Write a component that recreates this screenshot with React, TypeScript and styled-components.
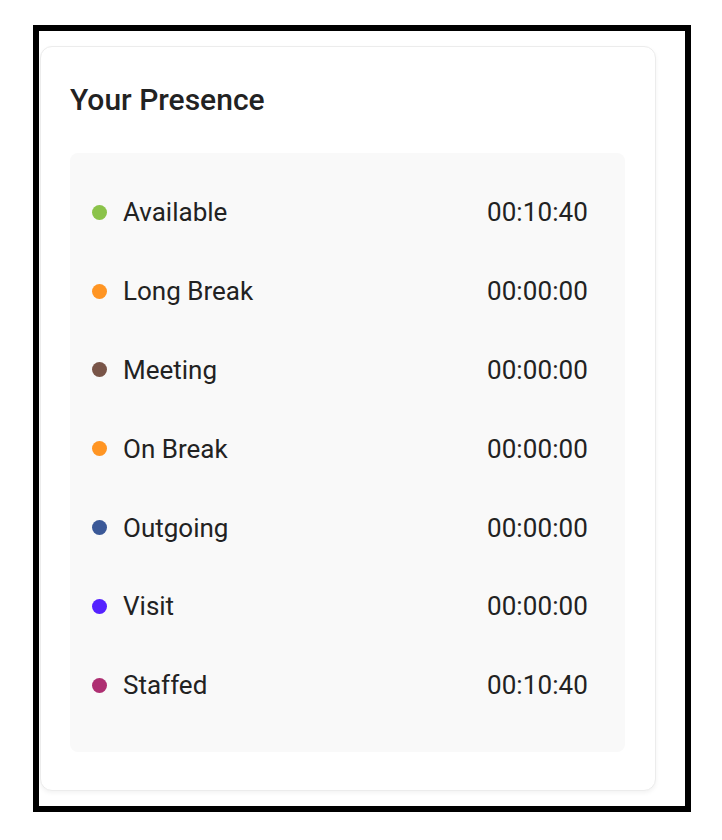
import React from "react";
import styled, { createGlobalStyle } from "styled-components";

const Global = createGlobalStyle`
  html, body { margin: 0; padding: 0; background: #ffffff; }
  body { font-family: Roboto, "Noto Sans", Arial, sans-serif; color: #212121; }
`;

const Page = styled.div`
  padding: 25px 31px 29px 33px;
`;

const Frame = styled.div`
  border: 6px solid #000;
  padding: 15px 29px 15px 1px;
  box-sizing: border-box;
  width: 658px;
`;

const Card = styled.section`
  background: #fff;
  border: 1px solid #ececec;
  border-radius: 12px;
  box-shadow: 0 2px 4px rgba(0, 0, 0, 0.05);
  padding: 36px 30px 38px 29px;
`;

const Title = styled.h2`
  margin: 0 0 36px 0;
  font-size: 30px;
  font-weight: 500;
  line-height: 34px;
  color: #222;
`;

const Panel = styled.div`
  background: #f9f9f9;
  border-radius: 8px;
  padding: 20px 37px 27px 22px;
`;

const Row = styled.div`
  display: flex;
  align-items: center;
  height: 78.8px;
`;

const Dot = styled.span<{ $color: string }>`
  width: 15px;
  height: 15px;
  border-radius: 50%;
  background: ${(p) => p.$color};
  flex: none;
  margin-right: 16px;
`;

const Label = styled.span`
  flex: 1;
  font-size: 26px;
  color: #222;
`;

const Time = styled.span`
  font-size: 26px;
  letter-spacing: 0.1px;
  color: #222;
`;

const items = [
  { label: "Available", color: "#8bc34a", time: "00:10:40" },
  { label: "Long Break", color: "#ff9523", time: "00:00:00" },
  { label: "Meeting", color: "#795548", time: "00:00:00" },
  { label: "On Break", color: "#ff9523", time: "00:00:00" },
  { label: "Outgoing", color: "#3b5998", time: "00:00:00" },
  { label: "Visit", color: "#5522ff", time: "00:00:00" },
  { label: "Staffed", color: "#ae2f72", time: "00:10:40" },
];

export default function App() {
  return (
    <>
      <Global />
      <Page>
        <Frame>
          <Card>
            <Title>Your Presence</Title>
            <Panel>
              {items.map((it) => (
                <Row key={it.label}>
                  <Dot $color={it.color} />
                  <Label>{it.label}</Label>
                  <Time>{it.time}</Time>
                </Row>
              ))}
            </Panel>
          </Card>
        </Frame>
      </Page>
    </>
  );
}
